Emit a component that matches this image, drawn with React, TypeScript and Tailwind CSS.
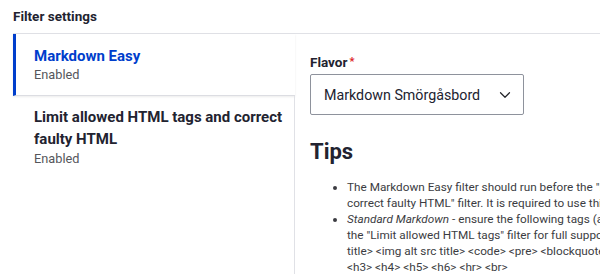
import React from "react";

const tabs = [
  { title: "Markdown Easy", status: "Enabled", active: true },
  { title: "Limit allowed HTML tags and correct faulty HTML", status: "Enabled", active: false },
];

const ChevronDown = () => (
  <svg className="w-[14px] h-[14px] text-[#232429]" viewBox="0 0 14 14" fill="none" stroke="currentColor">
    <path d="M2.5 4.75 7 9.25l4.5-4.5" strokeWidth={1.2} strokeLinecap="round" strokeLinejoin="round" />
  </svg>
);

export default function App() {
  const [active] = tabs.filter(t => t.active);
  const others = tabs.filter(t => !t.active);

  return (
    <div className="w-[600px] h-[274px] overflow-hidden bg-white text-[#222330] font-['Roboto','Liberation_Sans',sans-serif]">
      <h2 className="px-[13px] pt-[6px] h-[33px] text-[13.5px] leading-[20px] font-bold">Filter settings</h2>

      <div className="flex ml-[13px] border-t border-[#e0e1e6] h-[241px]">
        {/* tab menu */}
        <div className="w-[282px] shrink-0 flex flex-col">
          <div className="border-l-[3px] border-[#003ecc] border-b border-b-[#dcdde2] shadow-[0_1px_2px_rgba(0,0,0,0.08)] pl-[18px] pt-[12px] pb-[11px] h-[62px]">
            <div className="text-[15px] leading-[20px] font-bold text-[#003ecc]">{active.title}</div>
            <div className="text-[12.75px] leading-[18px] text-[#55565b]">{active.status}</div>
          </div>
          <div className="flex-1 border-r border-[#e0e1e6] pl-[21px] pr-[6px] pt-[10px]">
            {others.map(tab => (
              <div key={tab.title}>
                <div className="text-[15px] leading-[22px] font-bold">{tab.title}</div>
                <div className="text-[12.75px] leading-[18px] text-[#55565b]">{tab.status}</div>
              </div>
            ))}
          </div>
        </div>

        {/* tab panel */}
        <div className="w-[480px] shrink-0 pl-[15px] pt-[19px]">
          <label className="block text-[13.5px] leading-[18px] font-bold">
            Flavor<span className="ml-[2px] text-[11px] align-top text-[#dc2323]">*</span>
          </label>
          <div className="mt-[3px] w-[214px] h-[41px] border border-[#8e929c] rounded-[2px] flex items-center justify-between pl-[13px] pr-[11px]">
            <span className="text-[14.25px] leading-[20px] whitespace-nowrap">Markdown Smörgåsbord</span>
            <ChevronDown />
          </div>

          <h3 className="mt-[23px] text-[22px] leading-[28px] font-bold">Tips</h3>
          <ul className="mt-[13px] w-[442px] pl-[37px] list-disc text-[11.75px] leading-[16px] text-[#3b3c42]">
            <li>
              The Markdown Easy filter should run before the "Limit allowed HTML tags and correct faulty HTML" filter. It is
              required to use this filter.
            </li>
            <li>
              <em>Standard Markdown</em> - ensure the following tags (and attributes) are allowed in the "Limit allowed HTML
              tags" filter for full support: &lt;a href hreflang target title&gt; &lt;img alt src title&gt; &lt;code&gt;
              &lt;pre&gt; &lt;blockquote&gt; &lt;ul&gt; &lt;ol&gt; &lt;li&gt; &lt;h1&gt; &lt;h2&gt; &lt;h3&gt; &lt;h4&gt;
              &lt;h5&gt; &lt;h6&gt; &lt;hr&gt; &lt;br&gt;
            </li>
          </ul>
        </div>
      </div>
    </div>
  );
}
